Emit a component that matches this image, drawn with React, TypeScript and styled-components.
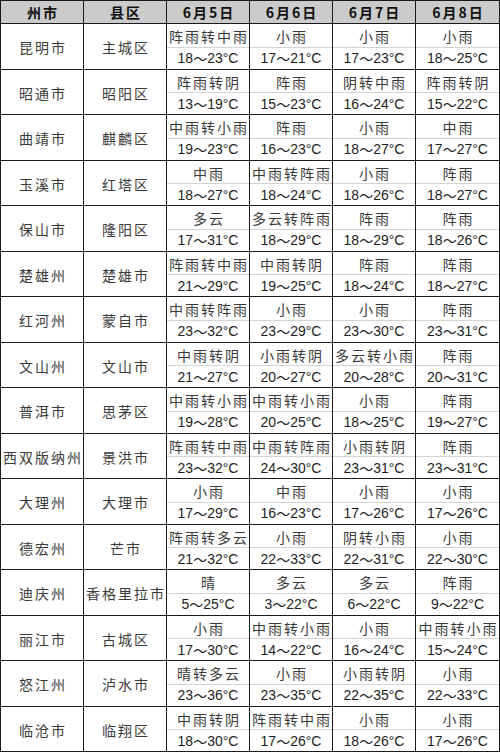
import React from "react";
import styled, { createGlobalStyle } from "styled-components";

const GlobalStyle = createGlobalStyle`
  html, body { margin: 0; padding: 0; background: #fff; }
  body { font-family: "Noto Sans CJK SC", "Noto Sans", sans-serif; }
  * { box-sizing: border-box; }
`;

type Day = [string, string];
type Region = { city: string; county: string; days: Day[] };

const DATES = ["6月5日", "6月6日", "6月7日", "6月8日"];

const DATA: Region[] = [
  { city: "昆明市", county: "主城区", days: [["阵雨转中雨", "18～23"], ["小雨", "17～21"], ["小雨", "17～23"], ["小雨", "18～25"]] },
  { city: "昭通市", county: "昭阳区", days: [["阵雨转阴", "13～19"], ["阵雨", "15～23"], ["阴转中雨", "16～24"], ["阵雨转阴", "15～22"]] },
  { city: "曲靖市", county: "麒麟区", days: [["中雨转小雨", "19～23"], ["阵雨", "16～23"], ["小雨", "18～27"], ["中雨", "17～27"]] },
  { city: "玉溪市", county: "红塔区", days: [["中雨", "18～27"], ["中雨转阵雨", "18～24"], ["小雨", "18～26"], ["阵雨", "18～27"]] },
  { city: "保山市", county: "隆阳区", days: [["多云", "17～31"], ["多云转阵雨", "18～29"], ["阵雨", "18～29"], ["阵雨", "18～26"]] },
  { city: "楚雄州", county: "楚雄市", days: [["阵雨转中雨", "21～29"], ["中雨转阴", "19～25"], ["阵雨", "18～24"], ["阵雨", "18～27"]] },
  { city: "红河州", county: "蒙自市", days: [["中雨转阵雨", "23～32"], ["小雨", "23～29"], ["小雨", "23～30"], ["阵雨", "23～31"]] },
  { city: "文山州", county: "文山市", days: [["中雨转阴", "21～27"], ["小雨转阴", "20～27"], ["多云转小雨", "20～28"], ["阵雨", "20～31"]] },
  { city: "普洱市", county: "思茅区", days: [["中雨转小雨", "19～28"], ["中雨转小雨", "20～25"], ["小雨", "18～25"], ["阵雨", "19～27"]] },
  { city: "西双版纳州", county: "景洪市", days: [["阵雨转中雨", "23～32"], ["中雨转阵雨", "24～30"], ["小雨转阴", "23～31"], ["阵雨", "23～31"]] },
  { city: "大理州", county: "大理市", days: [["小雨", "17～29"], ["中雨", "16～23"], ["小雨", "17～26"], ["小雨", "17～26"]] },
  { city: "德宏州", county: "芒市", days: [["阵雨转多云", "21～32"], ["小雨", "22～33"], ["阴转小雨", "22～31"], ["小雨", "22～30"]] },
  { city: "迪庆州", county: "香格里拉市", days: [["晴", "5～25"], ["多云", "3～22"], ["多云", "6～22"], ["阵雨", "9～22"]] },
  { city: "丽江市", county: "古城区", days: [["小雨", "17～30"], ["中雨转小雨", "14～22"], ["小雨", "16～24"], ["中雨转小雨", "15～24"]] },
  { city: "怒江州", county: "泸水市", days: [["晴转多云", "23～36"], ["小雨", "23～35"], ["小雨转阴", "22～35"], ["小雨", "22～33"]] },
  { city: "临沧市", county: "临翔区", days: [["中雨转阴", "18～30"], ["阵雨转中雨", "17～26"], ["小雨", "18～26"], ["小雨", "17～26"]] },
];

const Sheet = styled.div`
  width: 500px;
  display: flex;
  flex-direction: column;
  border-top: 1px solid #1a1a1a;
  border-left: 1px solid #1a1a1a;
  border-right: 1px solid #1a1a1a;
`;

const Row = styled.div<{ $header?: boolean }>`
  display: grid;
  grid-template-columns: repeat(6, 1fr);
  height: ${(p) => (p.$header ? "23px" : "45.5px")};
  border-bottom: 1.5px solid #1a1a1a;
  background: ${(p) => (p.$header ? "#cbcbcb" : "#ffffff")};
`;

const HeadCell = styled.div`
  display: flex;
  align-items: center;
  justify-content: center;
  border-right: 1.5px solid #1a1a1a;
  font-family: "Noto Sans CJK SC", "Liberation Sans", sans-serif;
  font-weight: 700;
  font-size: 14px;
  letter-spacing: 2px;
  padding-left: 2px;
  color: #111;
  &:last-child { border-right: none; }
`;

const NameCell = styled.div`
  display: flex;
  align-items: center;
  justify-content: center;
  padding-top: 2px;
  padding-left: 2px;
  border-right: 1.5px solid #1a1a1a;
  font-family: "Noto Sans CJK SC", sans-serif;
  font-size: 14px;
  letter-spacing: 2px;
  color: #3a3a3a;
  white-space: nowrap;
`;

const DayCell = styled.div`
  display: flex;
  flex-direction: column;
  border-right: 1.5px solid #1a1a1a;
  &:last-child { border-right: none; }
`;

const Weather = styled.div`
  flex: 1;
  display: flex;
  align-items: center;
  justify-content: center;
  padding-top: 2px;
  padding-left: 2px;
  border-bottom: 1px solid #d4d4d4;
  font-family: "Noto Sans CJK SC", sans-serif;
  font-size: 14px;
  letter-spacing: 2px;
  color: #3a3a3a;
  white-space: nowrap;
`;

const Temp = styled.div`
  flex: 1;
  display: flex;
  align-items: center;
  justify-content: center;
  font-family: "Liberation Sans", "Noto Sans CJK SC", sans-serif;
  font-size: 14px;
  color: #1e1e1e;
  white-space: nowrap;
`;

const Tilde = styled.span`
  font-family: "Noto Sans CJK SC", sans-serif;
  font-size: 14px;
`;

function TempText({ value }: { value: string }) {
  const [lo, hi] = value.split("～");
  return (
    <Temp>
      {lo}
      <Tilde>～</Tilde>
      {hi}°C
    </Temp>
  );
}

export default function App() {
  return (
    <>
      <GlobalStyle />
      <Sheet>
        <Row $header>
          <HeadCell>州市</HeadCell>
          <HeadCell>县区</HeadCell>
          {DATES.map((d) => (
            <HeadCell key={d}>{d}</HeadCell>
          ))}
        </Row>
        {DATA.map((r) => (
          <Row key={r.city}>
            <NameCell>{r.city}</NameCell>
            <NameCell>{r.county}</NameCell>
            {r.days.map(([w, t], i) => (
              <DayCell key={i}>
                <Weather>{w}</Weather>
                <TempText value={t} />
              </DayCell>
            ))}
          </Row>
        ))}
      </Sheet>
    </>
  );
}
